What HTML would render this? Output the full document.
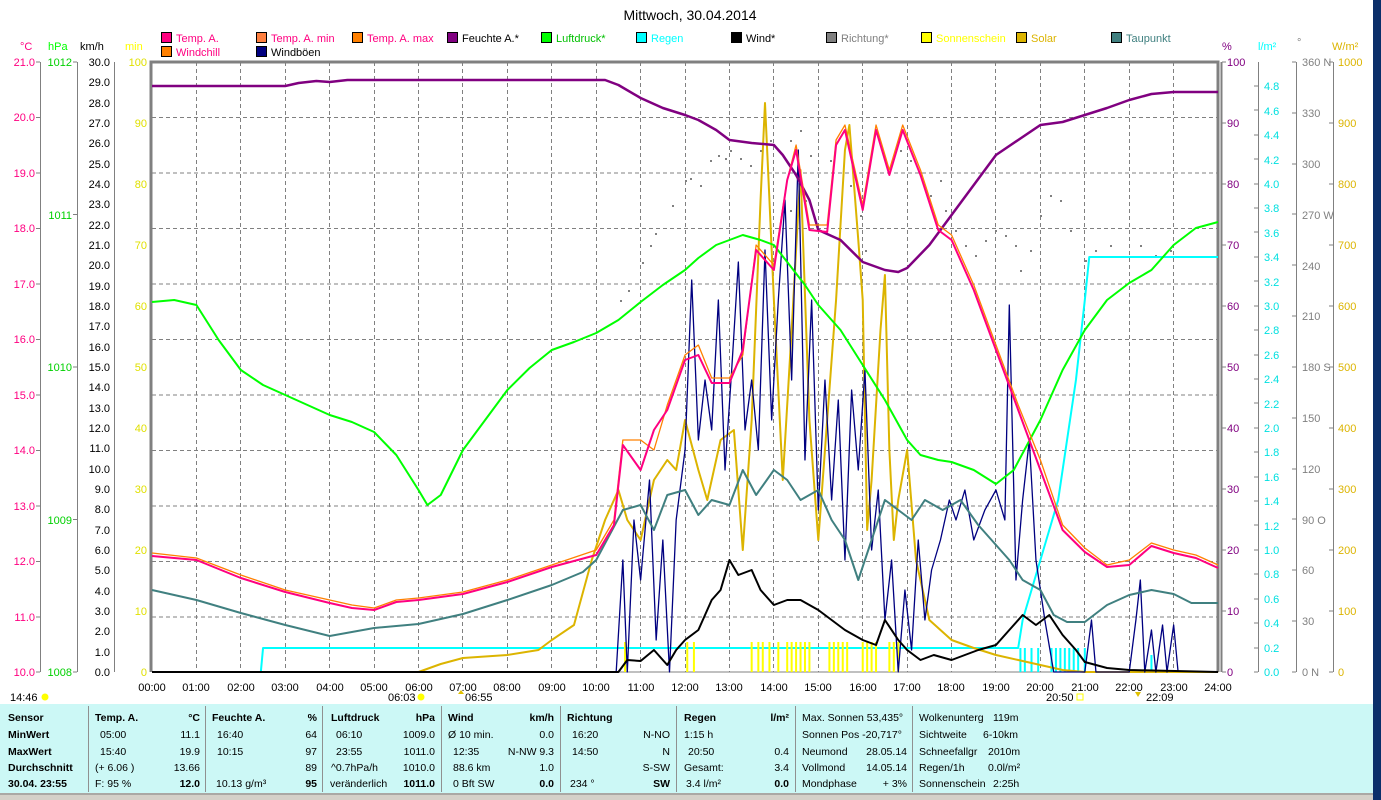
<!DOCTYPE html>
<html><head><meta charset="utf-8"><style>
html,body{margin:0;padding:0;background:#fff;width:1381px;height:800px;overflow:hidden}
svg{display:block;font-family:"Liberation Sans",sans-serif}
.t{font-size:11px}
.s{font-size:10.5px}
</style></head><body>
<svg width="1381" height="800" viewBox="0 0 1381 800">
<rect x="0" y="0" width="1381" height="800" fill="#fff"/>
<rect x="1373" y="0" width="8" height="800" fill="#0b2f6a"/>
<text x="690" y="20" font-size="14" text-anchor="middle">Mittwoch, 30.04.2014</text>

<g class="t" stroke="#000" stroke-width="1">
<rect x="161.5" y="32.5" width="10" height="10" fill="#ff0080"/>
<rect x="256.5" y="32.5" width="10" height="10" fill="#ff8040"/>
<rect x="352.5" y="32.5" width="10" height="10" fill="#ff8000"/>
<rect x="447.5" y="32.5" width="10" height="10" fill="#800080"/>
<rect x="541.5" y="32.5" width="10" height="10" fill="#00ff00"/>
<rect x="636.5" y="32.5" width="10" height="10" fill="#00ffff"/>
<rect x="731.5" y="32.5" width="10" height="10" fill="#000"/>
<rect x="826.5" y="32.5" width="10" height="10" fill="#808080"/>
<rect x="921.5" y="32.5" width="10" height="10" fill="#ffff00"/>
<rect x="1016.5" y="32.5" width="10" height="10" fill="#dcb400"/>
<rect x="1111.5" y="32.5" width="10" height="10" fill="#408080"/>
<rect x="161.5" y="46.5" width="10" height="10" fill="#ff8000"/>
<rect x="256.5" y="46.5" width="10" height="10" fill="#000080"/>
</g>
<g class="t">
<text x="176" y="42" fill="#ff0080">Temp. A.</text>
<text x="271" y="42" fill="#ff0080">Temp. A. min</text>
<text x="367" y="42" fill="#ff0080">Temp. A. max</text>
<text x="462" y="42" fill="#000">Feuchte A.*</text>
<text x="556" y="42" fill="#00c000">Luftdruck*</text>
<text x="651" y="42" fill="#00ffff">Regen</text>
<text x="746" y="42" fill="#000">Wind*</text>
<text x="841" y="42" fill="#808080">Richtung*</text>
<text x="936" y="42" fill="#ffff00">Sonnenschein</text>
<text x="1031" y="42" fill="#dcb400">Solar</text>
<text x="1126" y="42" fill="#408080">Taupunkt</text>
<text x="176" y="56" fill="#ff0080">Windchill</text>
<text x="271" y="56" fill="#000">Windböen</text>
</g>

<g class="t">
<text x="20" y="50" fill="#ff0080">°C</text>
<text x="48" y="50" fill="#00ff00">hPa</text>
<text x="80" y="50" fill="#000">km/h</text>
<text x="125" y="50" fill="#ffff00">min</text>
<text x="1222" y="50" fill="#800080">%</text>
<text x="1258" y="50" fill="#00ffff">l/m²</text>
<text x="1297" y="46" fill="#808080">°</text>
<text x="1332" y="50" fill="#dcb400">W/m²</text>
</g>

<g stroke="#808080" stroke-width="1">
<line x1="40.5" y1="62" x2="40.5" y2="672"/>
<line x1="77.5" y1="62" x2="77.5" y2="672"/>
<line x1="114.5" y1="62" x2="114.5" y2="672"/>
<line x1="1258.5" y1="62" x2="1258.5" y2="672"/>
<line x1="1296.5" y1="62" x2="1296.5" y2="672"/>
<line x1="1333.5" y1="62" x2="1333.5" y2="672"/>
</g>

<g class="t" fill="#ff0080" text-anchor="end">
<text x="35" y="66">21.0</text><text x="35" y="121">20.0</text><text x="35" y="177">19.0</text><text x="35" y="232">18.0</text><text x="35" y="288">17.0</text><text x="35" y="343">16.0</text><text x="35" y="399">15.0</text><text x="35" y="454">14.0</text><text x="35" y="510">13.0</text><text x="35" y="565">12.0</text><text x="35" y="621">11.0</text><text x="35" y="676">10.0</text>
</g>
<g stroke="#808080"><path d="M36 62h4M36 117.5h4M36 173h4M36 228.5h4M36 284h4M36 339.5h4M36 395h4M36 450.5h4M36 506h4M36 561.5h4M36 617h4M36 672h4M73 62h4M73 214.5h4M73 367h4M73 519.5h4M73 672h4"/></g>
<g class="t" fill="#00d000" text-anchor="end">
<text x="72" y="66">1012</text><text x="72" y="219">1011</text><text x="72" y="371">1010</text><text x="72" y="524">1009</text><text x="72" y="676">1008</text>
</g>
<g class="t" fill="#000" text-anchor="end">
<text x="110" y="66">30.0</text><text x="110" y="86">29.0</text><text x="110" y="107">28.0</text><text x="110" y="127">27.0</text><text x="110" y="147">26.0</text><text x="110" y="168">25.0</text><text x="110" y="188">24.0</text><text x="110" y="208">23.0</text><text x="110" y="229">22.0</text><text x="110" y="249">21.0</text><text x="110" y="269">20.0</text><text x="110" y="290">19.0</text><text x="110" y="310">18.0</text><text x="110" y="330">17.0</text><text x="110" y="351">16.0</text><text x="110" y="371">15.0</text><text x="110" y="391">14.0</text><text x="110" y="412">13.0</text><text x="110" y="432">12.0</text><text x="110" y="452">11.0</text><text x="110" y="473">10.0</text><text x="110" y="493">9.0</text><text x="110" y="513">8.0</text><text x="110" y="534">7.0</text><text x="110" y="554">6.0</text><text x="110" y="574">5.0</text><text x="110" y="595">4.0</text><text x="110" y="615">3.0</text><text x="110" y="635">2.0</text><text x="110" y="656">1.0</text><text x="110" y="676">0.0</text>
</g>
<g class="t" fill="#e0e000" text-anchor="end">
<text x="147" y="66">100</text><text x="147" y="127">90</text><text x="147" y="188">80</text><text x="147" y="249">70</text><text x="147" y="310">60</text><text x="147" y="371">50</text><text x="147" y="432">40</text><text x="147" y="493">30</text><text x="147" y="554">20</text><text x="147" y="615">10</text><text x="147" y="676">0</text>
</g>

<g class="t" fill="#800080">
<text x="1227" y="66">100</text><text x="1227" y="127">90</text><text x="1227" y="188">80</text><text x="1227" y="249">70</text><text x="1227" y="310">60</text><text x="1227" y="371">50</text><text x="1227" y="432">40</text><text x="1227" y="493">30</text><text x="1227" y="554">20</text><text x="1227" y="615">10</text><text x="1227" y="676">0</text>
</g>
<g class="t" fill="#00e0e0">
<text x="1264" y="90">4.8</text><text x="1264" y="115">4.6</text><text x="1264" y="139">4.4</text><text x="1264" y="164">4.2</text><text x="1264" y="188">4.0</text><text x="1264" y="212">3.8</text><text x="1264" y="237">3.6</text><text x="1264" y="261">3.4</text><text x="1264" y="286">3.2</text><text x="1264" y="310">3.0</text><text x="1264" y="334">2.8</text><text x="1264" y="359">2.6</text><text x="1264" y="383">2.4</text><text x="1264" y="408">2.2</text><text x="1264" y="432">2.0</text><text x="1264" y="456">1.8</text><text x="1264" y="481">1.6</text><text x="1264" y="505">1.4</text><text x="1264" y="530">1.2</text><text x="1264" y="554">1.0</text><text x="1264" y="578">0.8</text><text x="1264" y="603">0.6</text><text x="1264" y="627">0.4</text><text x="1264" y="652">0.2</text><text x="1264" y="676">0.0</text>
</g>
<g class="t" fill="#808080">
<text x="1302" y="66">360 N</text><text x="1302" y="117">330</text><text x="1302" y="168">300</text><text x="1302" y="219">270 W</text><text x="1302" y="270">240</text><text x="1302" y="320">210</text><text x="1302" y="371">180 S</text><text x="1302" y="422">150</text><text x="1302" y="473">120</text><text x="1302" y="524">90  O</text><text x="1302" y="574">60</text><text x="1302" y="625">30</text><text x="1302" y="676">0  N</text>
</g>
<g class="t" fill="#dcb400">
<text x="1338" y="66">1000</text><text x="1338" y="127">900</text><text x="1338" y="188">800</text><text x="1338" y="249">700</text><text x="1338" y="310">600</text><text x="1338" y="371">500</text><text x="1338" y="432">400</text><text x="1338" y="493">300</text><text x="1338" y="554">200</text><text x="1338" y="615">100</text><text x="1338" y="676">0</text>
</g>
<g stroke="#808080"><path d="M1222 62h4M1222 123h4M1222 184h4M1222 245h4M1222 306h4M1222 367h4M1222 428h4M1222 489h4M1222 550h4M1222 611h4M1222 672h4M1254 86h4M1254 110h4M1254 135h4M1254 159h4M1254 184h4M1254 208h4M1254 232h4M1254 257h4M1254 281h4M1254 306h4M1254 330h4M1254 355h4M1254 379h4M1254 403h4M1254 428h4M1254 452h4M1254 477h4M1254 501h4M1254 525h4M1254 550h4M1254 574h4M1254 599h4M1254 623h4M1254 648h4M1254 672h4M1292 62h4M1292 113h4M1292 164h4M1292 214h4M1292 265h4M1292 316h4M1292 367h4M1292 418h4M1292 469h4M1292 519h4M1292 570h4M1292 621h4M1292 672h4M1329 62h4M1329 123h4M1329 184h4M1329 245h4M1329 306h4M1329 367h4M1329 428h4M1329 489h4M1329 550h4M1329 611h4M1329 672h4"/></g>

<g stroke="#808080" stroke-dasharray="4,3" stroke-width="1">
<path d="M152 117.5H1218M152 173H1218M152 228.5H1218M152 284H1218M152 339.5H1218M152 395H1218M152 450.5H1218M152 506H1218M152 561.5H1218M152 617H1218"/>
<path d="M196.5 62V672M240.5 62V672M285.5 62V672M329.5 62V672M374.5 62V672M418.5 62V672M462.5 62V672M507.5 62V672M551.5 62V672M596.5 62V672M640.5 62V672M685.5 62V672M729.5 62V672M773.5 62V672M818.5 62V672M862.5 62V672M907.5 62V672M951.5 62V672M995.5 62V672M1040.5 62V672M1084.5 62V672M1129.5 62V672M1173.5 62V672"/>
</g>
<path d="M151 672V62H1218V672" fill="none" stroke="#808080" stroke-width="3"/>
<line x1="1221.5" y1="62" x2="1221.5" y2="672" stroke="#808080" stroke-width="2"/>
<line x1="152" y1="672" x2="1218" y2="672" stroke="#808080"/>

<!-- direction dots -->
<g fill="#808080">
<rect x="620" y="300" width="2" height="2"/><rect x="628" y="290" width="2" height="2"/><rect x="642" y="262" width="2" height="2"/><rect x="650" y="245" width="2" height="2"/><rect x="655" y="233" width="2" height="2"/><rect x="672" y="205" width="2" height="2"/><rect x="685" y="180" width="2" height="2"/><rect x="690" y="178" width="2" height="2"/><rect x="700" y="185" width="2" height="2"/><rect x="710" y="160" width="2" height="2"/><rect x="718" y="155" width="2" height="2"/><rect x="725" y="158" width="2" height="2"/><rect x="730" y="150" width="2" height="2"/><rect x="740" y="158" width="2" height="2"/><rect x="750" y="165" width="2" height="2"/><rect x="760" y="150" width="2" height="2"/><rect x="770" y="140" width="2" height="2"/><rect x="790" y="140" width="2" height="2"/><rect x="800" y="130" width="2" height="2"/><rect x="810" y="155" width="2" height="2"/><rect x="790" y="210" width="2" height="2"/><rect x="805" y="200" width="2" height="2"/><rect x="830" y="160" width="2" height="2"/><rect x="850" y="185" width="2" height="2"/><rect x="860" y="215" width="2" height="2"/><rect x="865" y="250" width="2" height="2"/><rect x="900" y="150" width="2" height="2"/><rect x="910" y="160" width="2" height="2"/><rect x="920" y="175" width="2" height="2"/><rect x="930" y="195" width="2" height="2"/><rect x="940" y="180" width="2" height="2"/><rect x="945" y="210" width="2" height="2"/><rect x="955" y="230" width="2" height="2"/><rect x="965" y="245" width="2" height="2"/><rect x="975" y="255" width="2" height="2"/><rect x="985" y="240" width="2" height="2"/><rect x="995" y="230" width="2" height="2"/><rect x="1005" y="235" width="2" height="2"/><rect x="1015" y="245" width="2" height="2"/><rect x="1020" y="270" width="2" height="2"/><rect x="1030" y="250" width="2" height="2"/><rect x="1040" y="215" width="2" height="2"/><rect x="1050" y="195" width="2" height="2"/><rect x="1060" y="200" width="2" height="2"/><rect x="1070" y="230" width="2" height="2"/><rect x="1085" y="260" width="2" height="2"/><rect x="1095" y="250" width="2" height="2"/><rect x="1110" y="245" width="2" height="2"/><rect x="1140" y="245" width="2" height="2"/><rect x="1155" y="255" width="2" height="2"/><rect x="1170" y="250" width="2" height="2"/>
</g>

<g transform="translate(152,0) scale(44.42,1)" fill="none" stroke-linejoin="round">
<polyline vector-effect="non-scaling-stroke" stroke="#00ffff" stroke-width="2" points="2.45,672 2.5,648 19.5,648 19.6,620 20,560 20.4,500 20.8,380 21.0,300 21.1,257 24,257"/>
<g stroke="#ffff00" stroke-width="2">
<path vector-effect="non-scaling-stroke" d="M10.65 672V642M12.05 672V642M12.2 672V642M13.5 672V642M13.65 672V642M13.75 672V642M13.9 672V642M14.1 672V642M14.3 672V642M14.4 672V642M14.5 672V642M14.6 672V642M14.7 672V642M14.8 672V642M15.25 672V642M15.35 672V642M15.45 672V642M15.55 672V642M15.65 672V642M16 672V642M16.1 672V642M16.2 672V642M16.3 672V642M16.6 672V642M16.7 672V642M16.8 672V642"/>
</g>
<g stroke="#00ffff" stroke-width="2">
<path vector-effect="non-scaling-stroke" d="M19.55 672V648M19.65 672V648M19.8 672V648M19.95 672V648M20.25 672V648M20.35 672V648M20.45 672V648M20.55 672V648M20.65 672V648M20.75 672V648M20.85 672V648M21.0 672V648M22.5 672V655"/>
</g>
<polyline vector-effect="non-scaling-stroke" stroke="#dcb400" stroke-width="2" points="6,672 6.5,664 7,658 8,655 8.7,650 9,640 9.5,625 9.9,560 10.2,520 10.5,490 10.7,520 11,540 11.3,480 11.6,460 11.8,470 12,420 12.3,470 12.5,500 12.8,440 13.1,430 13.3,550 13.5,420 13.7,200 13.8,103 13.9,200 14.0,300 14.2,480 14.4,330 14.6,170 14.8,420 15.0,540 15.2,420 15.4,300 15.6,150 15.7,125 15.9,240 16.0,300 16.1,530 16.2,480 16.4,330 16.5,275 16.6,450 16.7,540 16.8,500 17,450 17.2,560 17.5,620 18,640 18.5,648 19,655 19.5,660 20,665 20.5,670 21,672 24,672"/>
<polyline vector-effect="non-scaling-stroke" stroke="#000080" stroke-width="1.3" points="10.45,672 10.6,560 10.7,672 10.85,520 11,580 11.2,480 11.35,640 11.5,540 11.65,672 11.8,520 12,450 12.15,280 12.3,440 12.45,380 12.6,430 12.75,300 12.9,470 13.05,370 13.2,262 13.35,430 13.5,380 13.65,450 13.8,250 13.95,420 14.1,300 14.25,200 14.4,380 14.55,150 14.7,460 14.85,300 15,510 15.15,380 15.3,500 15.45,400 15.6,560 15.75,390 15.9,470 16.05,370 16.2,550 16.35,490 16.5,620 16.65,560 16.8,672 16.95,590 17.1,650 17.25,540 17.4,620 17.55,570 17.75,540 17.95,500 18.1,520 18.3,490 18.5,540 18.75,510 19,490 19.2,520 19.3,305 19.45,580 19.6,500 19.75,440 19.9,560 20.1,620 20.3,672 21,672 21.15,620 21.25,672 22,672 22.15,620 22.25,580 22.35,672 22.5,630 22.6,672 22.75,625 22.85,672 23,625 23.1,672"/>
<polyline vector-effect="non-scaling-stroke" stroke="#408080" stroke-width="2" points="0,590 1,600 2,613 3,625 4,636 5,628 6,624 7,614 8,600 9,585 9.7,572 10,560 10.3,535 10.6,510 11,505 11.3,530 11.6,495 12,490 12.3,515 12.6,500 13,505 13.3,470 13.6,495 14,470 14.3,480 14.6,500 15,490 15.3,520 15.6,540 15.9,580 16.2,540 16.5,500 16.8,510 17.1,520 17.4,500 17.8,510 18.2,500 18.6,525 19,545 19.3,560 19.6,580 20,590 20.3,615 20.6,622 21,622 21.5,605 22,595 22.5,590 23,594 23.4,603 24,603"/>
<polyline vector-effect="non-scaling-stroke" stroke="#000" stroke-width="2" points="0,672 10.5,672 10.7,660 11,661 11.3,650 11.6,665 11.8,650 12,640 12.3,630 12.6,600 12.8,590 13,560 13.2,575 13.5,570 13.7,590 14,605 14.3,600 14.6,600 15,610 15.3,620 15.6,630 16,640 16.3,645 16.5,620 16.8,640 17,650 17.3,660 17.6,655 18,660 18.3,655 18.6,650 19,645 19.3,630 19.6,615 19.9,625 20.2,615 20.5,635 20.8,650 21,662 21.5,668 22,670 24,672"/>
<polyline vector-effect="non-scaling-stroke" stroke="#00ff00" stroke-width="2" points="0,302 0.5,300 1,305 1.5,340 2,370 2.5,385 3,395 3.5,405 4,415 4.5,422 5,432 5.5,455 6,490 6.2,505 6.5,495 7,450 7.5,420 8,390 8.5,368 9,350 9.5,342 10,333 10.5,320 11,302 11.5,285 12,270 12.3,258 12.7,245 13,240 13.3,235 13.7,240 14,245 14.3,262 14.7,285 15,305 15.5,330 16,365 16.5,400 17,440 17.3,455 17.7,460 18,462 18.5,470 19,484 19.4,470 20,420 20.5,370 21,330 21.5,300 22,283 22.5,270 23,245 23.5,228 24,222"/>
<polyline vector-effect="non-scaling-stroke" stroke="#800080" stroke-width="2.5" points="0,86 3,86 3.3,83 3.7,81 4,82 4.4,80 10.2,80 10.5,85 11,98 11.5,108 12,115 12.3,120 12.7,130 13,140 13.5,143 14,145 14.2,155 14.5,175 14.8,200 15,230 15.5,240 16,262 16.5,270 16.8,272 17,268 17.5,245 18,215 18.5,185 19,155 19.5,140 20,125 20.5,122 21,115 21.5,108 22,100 22.5,94 23,92 24,92"/>
<polyline vector-effect="non-scaling-stroke" stroke="#ff8000" stroke-width="1.3" points="0,553 1,558 2,575 3,590 4,600 4.5,605 5,608 5.5,600 6,598 7,592 8,580 9,565 10,550 10.4,520 10.6,440 11,440 11.3,450 11.6,405 12,355 12.3,345 12.6,378 13,378 13.3,355 13.6,245 14,265 14.3,180 14.5,145 14.8,225 15.2,225 15.4,140 15.6,125 16,205 16.3,125 16.6,170 16.9,125 17.3,170 17.7,225 18,235 18.5,285 19,345 19.5,405 20,460 20.5,525 21,548 21.5,565 22,560 22.5,543 23,550 23.5,555 24,565"/>
<polyline vector-effect="non-scaling-stroke" stroke="#ff0080" stroke-width="2" points="0,556 1,560 2,578 3,592 4,603 4.5,608 5,610 5.5,602 6,600 7,594 8,582 9,567 10,555 10.4,525 10.6,445 11,470 11.3,430 11.6,410 12,360 12.3,355 12.6,383 13,383 13.3,350 13.6,250 14,270 14.3,180 14.5,150 14.8,230 15.2,232 15.4,145 15.6,130 16,210 16.3,130 16.6,175 16.9,130 17.3,175 17.7,230 18,240 18.5,290 19,350 19.5,410 20,470 20.5,530 21,552 21.5,567 22,565 22.5,546 23,553 23.5,558 24,568"/>
</g>

<g class="t" text-anchor="middle">
<text x="152" y="691">00:00</text><text x="196" y="691">01:00</text><text x="241" y="691">02:00</text><text x="285" y="691">03:00</text><text x="330" y="691">04:00</text><text x="374" y="691">05:00</text><text x="419" y="691">06:00</text><text x="463" y="691">07:00</text><text x="507" y="691">08:00</text><text x="552" y="691">09:00</text><text x="596" y="691">10:00</text><text x="641" y="691">11:00</text><text x="685" y="691">12:00</text><text x="729" y="691">13:00</text><text x="774" y="691">14:00</text><text x="818" y="691">15:00</text><text x="863" y="691">16:00</text><text x="907" y="691">17:00</text><text x="951" y="691">18:00</text><text x="996" y="691">19:00</text><text x="1040" y="691">20:00</text><text x="1085" y="691">21:00</text><text x="1129" y="691">22:00</text><text x="1174" y="691">23:00</text><text x="1218" y="691">24:00</text>
</g>
<g class="t">
<text x="10" y="701">14:46</text><circle cx="45" cy="697" r="3.5" fill="#ffff00"/>
<text x="388" y="701">06:03</text><circle cx="421" cy="697" r="3.5" fill="#ffff00"/>
<text x="465" y="701">06:55</text><path d="M458 694l3-4 3 4z" fill="#e0c000"/>
<text x="1046" y="701">20:50</text><rect x="1077" y="694" width="6" height="6" fill="none" stroke="#ffff00"/>
<text x="1146" y="701">22:09</text><path d="M1135 692l3 5 3-5z" fill="#e0c000"/>
</g>

<rect x="0" y="704" width="1373" height="90" fill="#ccf8f6"/>
<rect x="0" y="793" width="1373" height="7" fill="#d4d0c8"/>
<line x1="0" y1="794" x2="1373" y2="794" stroke="#808080"/>
<g stroke="#909090"><path d="M88.5 706V792M205.5 706V792M322.5 706V792M441.5 706V792M560.5 706V792M676.5 706V792M795.5 706V792M912.5 706V792"/></g>
<g class="s">
<g font-weight="bold">
<text x="8" y="721">Sensor</text><text x="8" y="738">MinWert</text><text x="8" y="755">MaxWert</text><text x="8" y="771">Durchschnitt</text><text x="8" y="787">30.04. 23:55</text>
<text x="95" y="721">Temp. A.</text><text x="200" y="721" text-anchor="end">°C</text>
<text x="212" y="721">Feuchte A.</text><text x="317" y="721" text-anchor="end">%</text>
<text x="331" y="721">Luftdruck</text><text x="435" y="721" text-anchor="end">hPa</text>
<text x="448" y="721">Wind</text><text x="554" y="721" text-anchor="end">km/h</text>
<text x="567" y="721">Richtung</text>
<text x="684" y="721">Regen</text><text x="789" y="721" text-anchor="end">l/m²</text>
</g>
<text x="100" y="738">05:00</text><text x="200" y="738" text-anchor="end">11.1</text>
<text x="100" y="755">15:40</text><text x="200" y="755" text-anchor="end">19.9</text>
<text x="95" y="771">(+ 6.06 )</text><text x="200" y="771" text-anchor="end">13.66</text>
<text x="95" y="787">F: 95 %</text><text x="200" y="787" text-anchor="end" font-weight="bold">12.0</text>
<text x="217" y="738">16:40</text><text x="317" y="738" text-anchor="end">64</text>
<text x="217" y="755">10:15</text><text x="317" y="755" text-anchor="end">97</text>
<text x="317" y="771" text-anchor="end">89</text>
<text x="216" y="787">10.13 g/m³</text><text x="317" y="787" text-anchor="end" font-weight="bold">95</text>
<text x="336" y="738">06:10</text><text x="435" y="738" text-anchor="end">1009.0</text>
<text x="336" y="755">23:55</text><text x="435" y="755" text-anchor="end">1011.0</text>
<text x="331" y="771">^0.7hPa/h</text><text x="435" y="771" text-anchor="end">1010.0</text>
<text x="330" y="787">veränderlich</text><text x="435" y="787" text-anchor="end" font-weight="bold">1011.0</text>
<text x="448" y="738">Ø 10 min.</text><text x="554" y="738" text-anchor="end">0.0</text>
<text x="453" y="755">12:35</text><text x="554" y="755" text-anchor="end">N-NW 9.3</text>
<text x="453" y="771">88.6 km</text><text x="554" y="771" text-anchor="end">1.0</text>
<text x="453" y="787">0 Bft SW</text><text x="554" y="787" text-anchor="end" font-weight="bold">0.0</text>
<text x="572" y="738">16:20</text><text x="670" y="738" text-anchor="end">N-NO</text>
<text x="572" y="755">14:50</text><text x="670" y="755" text-anchor="end">N</text>
<text x="670" y="771" text-anchor="end">S-SW</text>
<text x="570" y="787">234 °</text><text x="670" y="787" text-anchor="end" font-weight="bold">SW</text>
<text x="684" y="738">1:15 h</text>
<text x="688" y="755">20:50</text><text x="789" y="755" text-anchor="end">0.4</text>
<text x="684" y="771">Gesamt:</text><text x="789" y="771" text-anchor="end">3.4</text>
<text x="686" y="787">3.4 l/m²</text><text x="789" y="787" text-anchor="end" font-weight="bold">0.0</text>
<text x="802" y="721">Max. Sonnen 53,435°</text>
<text x="802" y="738">Sonnen Pos -20,717°</text>
<text x="802" y="755">Neumond</text><text x="907" y="755" text-anchor="end">28.05.14</text>
<text x="802" y="771">Vollmond</text><text x="907" y="771" text-anchor="end">14.05.14</text>
<text x="802" y="787">Mondphase</text><text x="907" y="787" text-anchor="end">+ 3%</text>
<text x="919" y="721">Wolkenunterg</text><text x="993" y="721">119m</text>
<text x="919" y="738">Sichtweite</text><text x="983" y="738">6-10km</text>
<text x="919" y="755">Schneefallgr</text><text x="988" y="755">2010m</text>
<text x="919" y="771">Regen/1h</text><text x="988" y="771">0.0l/m²</text>
<text x="919" y="787">Sonnenschein</text><text x="993" y="787">2:25h</text>
</g>
</svg>
</body></html>
